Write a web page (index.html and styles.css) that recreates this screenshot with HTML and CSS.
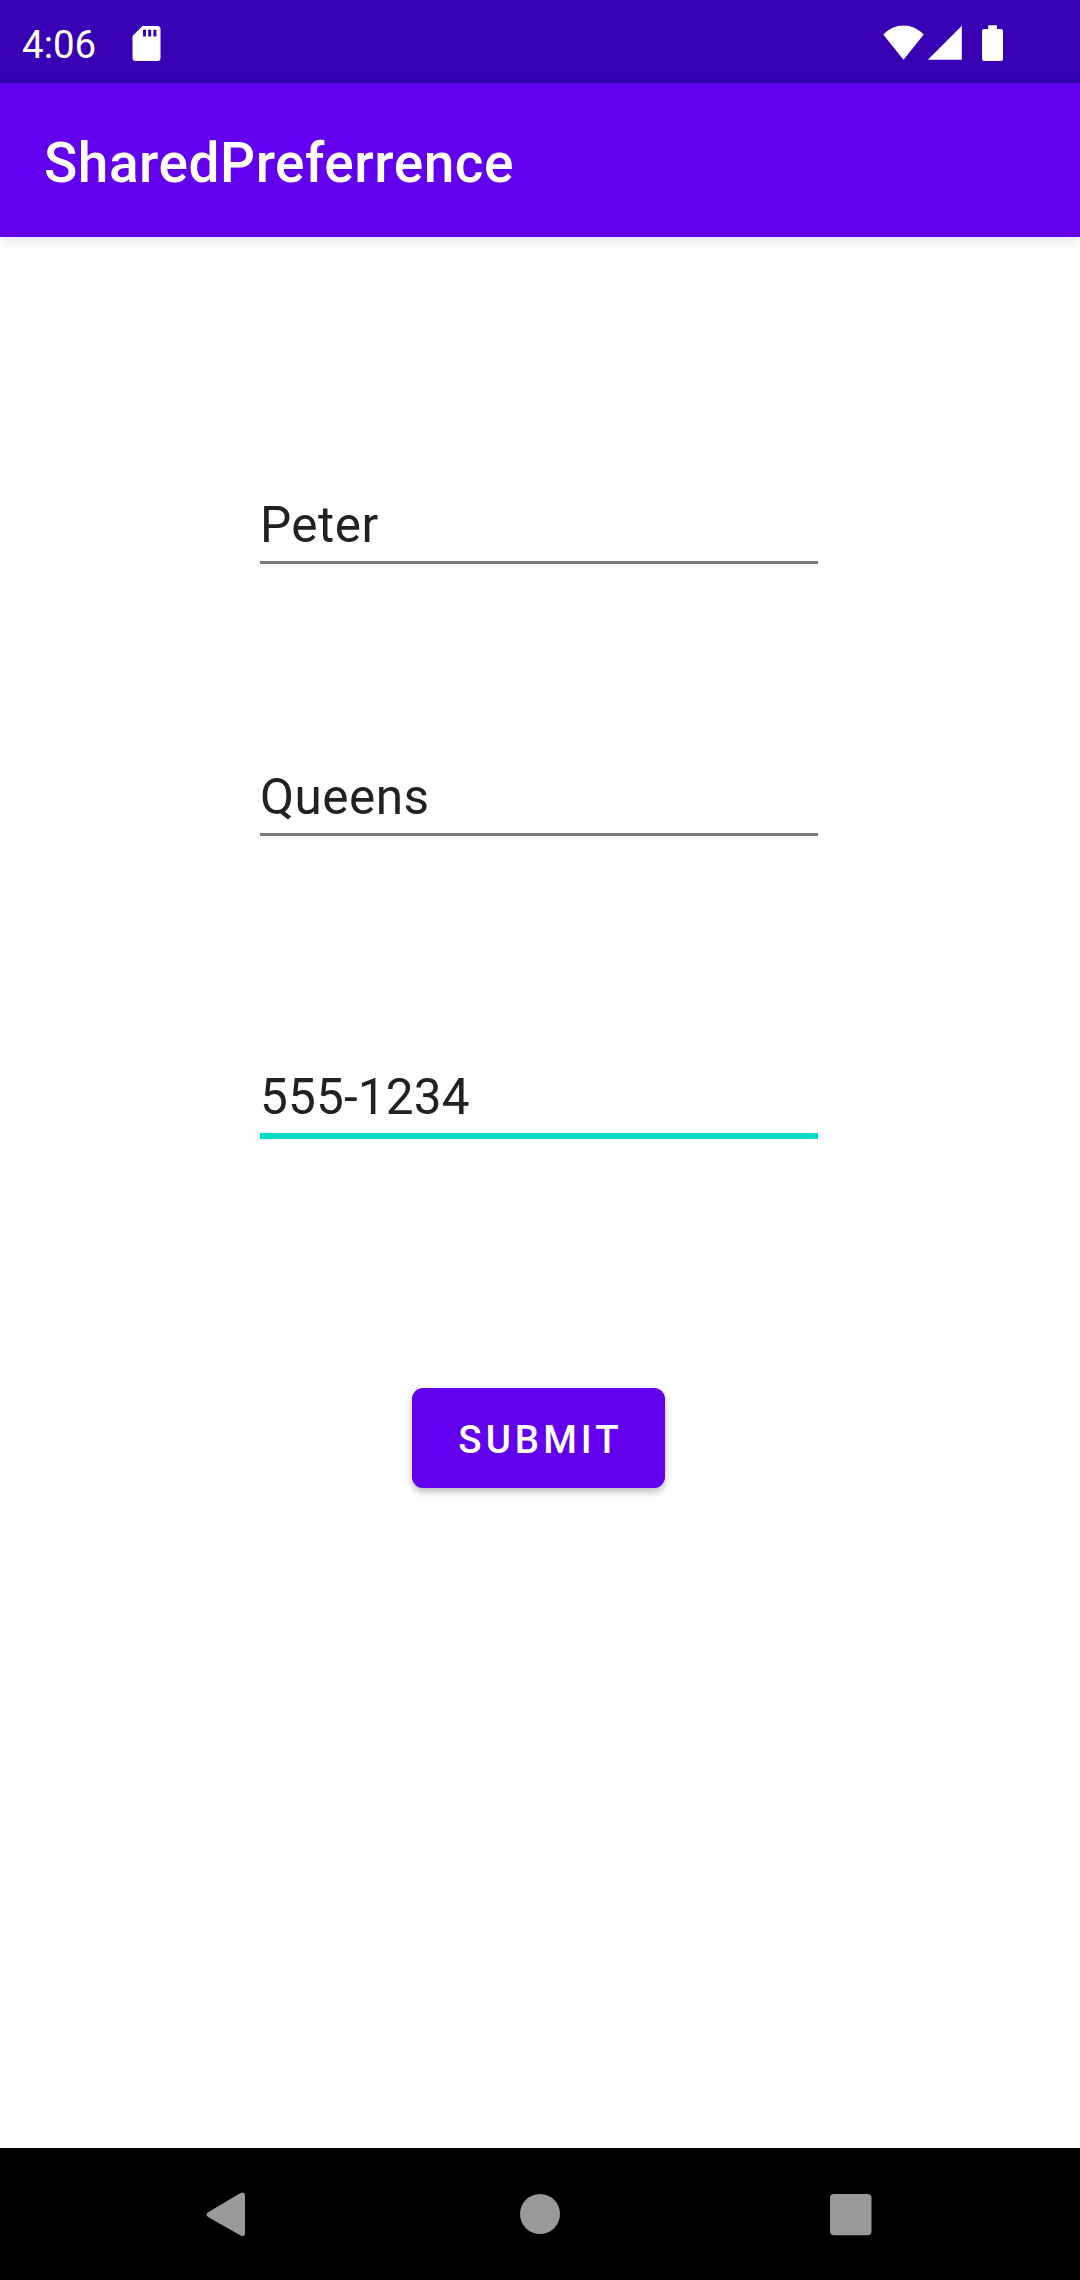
FILE: index.html
```html
<!DOCTYPE html>
<html lang="en">
<head>
<meta charset="utf-8">
<title>SharedPreferrence</title>
<link rel="stylesheet" href="styles.css">
</head>
<body>
<div class="screen">
  <header class="status-bar">
    <span class="clock">4:06</span>
    <svg class="icon-sd" width="30" height="38" viewBox="0 0 30 38"><path fill="#fff" fill-rule="evenodd" d="M11.5 1H25.5Q28.5 1 28.5 4V33Q28.5 36 25.5 36H3.500Q.5 36 .5 33V12Q.5 11 1.200 10.300L9.500 1.900Q10.300 1 11.500 1ZM11 4.800V11.600H14V4.800ZM16.200 4.800V11.600H19.200V4.800ZM21.400 4.800V11.600H24.400V4.800Z"/></svg>
    <svg class="icon-signals" width="122" height="38" viewBox="0 0 122 38" fill="#fff">
      <path d="M.2 9.600Q9 .4 20.500 .4T40.800 9.600L20.500 34.700Z"/>
      <path d="M78.800 .8V34.700H44.800Z"/>
      <path d="M105.200 .3H114V4H118Q120 4 120 6V34Q120 36 118 36H101Q99 36 99 34V6Q99 4 101 4H105.200Z"/>
    </svg>
  </header>
  <div class="app-bar"><h1 class="title">SharedPreferrence</h1></div>
  <main class="form">
    <div class="field">Peter</div>
    <div class="field field-address">Queens</div>
    <div class="field field-phone">555-1234</div>
    <button class="submit" type="button">SUBMIT</button>
  </main>
  <nav class="nav-bar">
    <svg class="nav-icon" viewBox="0 0 60 60"><path d="M9.500 28L41.500 8.900Q46 7 46 12V48.500Q46 53.500 41.500 51.600L9.500 33.200Q5.500 30.700 9.500 28Z"/></svg>
    <svg class="nav-icon" viewBox="0 0 60 60"><circle cx="30" cy="30" r="20"/></svg>
    <svg class="nav-icon" viewBox="0 0 60 60"><rect x="9" y="10" width="41.500" height="41.300" rx="4"/></svg>
  </nav>
</div>
</body>
</html>
```
FILE: styles.css
```css
* { box-sizing: border-box; }
body {
  margin: 0;
  background: #fff;
  font-family: Roboto, sans-serif;
}
.screen {
  display: flex;
  flex-direction: column;
  width: 1080px;
  height: 2280px;
}
.status-bar {
  display: flex;
  align-items: flex-start;
  height: 83px;
  padding: 25px 75px 0 22px;
  background: #3700b3;
  color: #fff;
}
.clock {
  width: 110px;
  font-size: 38.5px;
  line-height: 40px;
}
.icon-signals { margin-left: auto; }
.app-bar {
  display: flex;
  align-items: center;
  height: 154px;
  padding: 6px 44px 0;
  background: #6200ee;
  box-shadow: 0 4px 11px rgba(0, 0, 0, .1);
}
.title {
  margin: 0;
  color: #fff;
  font-size: 55px;
  font-weight: 500;
  line-height: 66px;
  letter-spacing: .52px;
}
.form {
  display: flex;
  flex: 1;
  flex-direction: column;
  align-items: center;
  padding: 258px 2px 0 0;
}
.field {
  width: 558px;
  height: 69px;
  border-bottom: 3px solid #7b7b7b;
  color: #212121;
  font-size: 49.5px;
  line-height: 61px;
  letter-spacing: .45px;
}
.field-address { margin-top: 203px; }
.field-phone {
  height: 72px;
  margin-top: 231px;
  border-bottom: 6px solid #03dac5;
  letter-spacing: .18px;
}
.submit {
  width: 253px;
  height: 100px;
  margin: 249px 1px 0 0;
  padding: 3px 0 0 4px;
  border: 0;
  border-radius: 11px;
  background: #6200ee;
  box-shadow: 0 4px 7px rgba(0, 0, 0, .26);
  color: #fff;
  font: 500 38.5px/46px Roboto, sans-serif;
  letter-spacing: 4px;
}
.nav-bar {
  display: flex;
  justify-content: space-between;
  height: 132px;
  padding: 36px 199px 0 199px;
  background: #000;
}
.nav-icon {
  width: 60px;
  height: 60px;
  fill: #999;
}
```
